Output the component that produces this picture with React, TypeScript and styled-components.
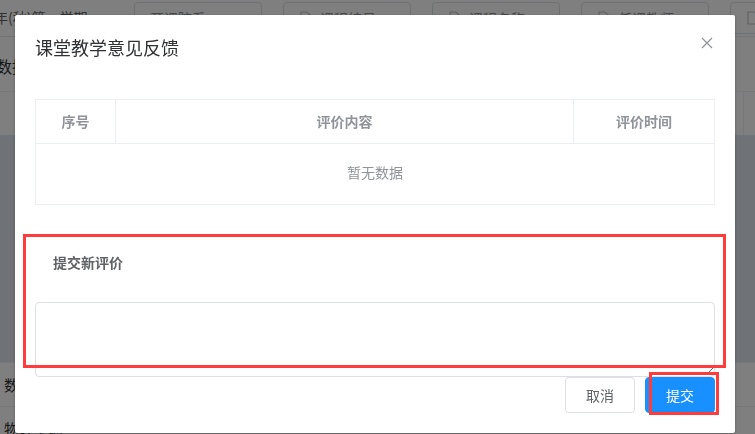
import React from 'react'
import styled, { createGlobalStyle } from 'styled-components'

const GlobalStyle = createGlobalStyle`
	html, body {
		margin: 0;
		padding: 0;
		width: 755px;
		height: 434px;
		overflow: hidden;
		background: #fff;
		font-family: 'Noto Sans CJK SC', 'Noto Sans', sans-serif;
	}
	* {
		box-sizing: border-box;
	}
`

const filters = [
	{ text: '开课院系', icon: false },
	{ text: '课程编号', icon: true },
	{ text: '课程名称', icon: true },
	{ text: '任课教师', icon: true },
	{ text: '课程类别', icon: true },
]

const rows = ['数学分析', '物理实验']

const App = () => {
	return (
		<>
			<GlobalStyle />
			<Page>
				<Toolbar>
					<Term>年(秋)第一学期</Term>
					{filters.map((f) => (
						<FilterBox key={f.text}>
							{f.icon && <DocIcon />}
							<span>{f.text}</span>
						</FilterBox>
					))}
				</Toolbar>
				<Heading>数据统计</Heading>
				<GridHead>
					<span />
				</GridHead>
				<Band />
				{rows.map((r) => (
					<GridRow key={r}>{r}</GridRow>
				))}
			</Page>

			<Overlay>
				<Dialog>
					<DialogHeader>
						<DialogTitle>课堂教学意见反馈</DialogTitle>
						<CloseButton aria-label="close">
							<svg width="12" height="12" viewBox="0 0 12 12">
								<path d="M1 1L11 11M11 1L1 11" stroke="#909399" strokeWidth="1.2" />
							</svg>
						</CloseButton>
					</DialogHeader>

					<DialogBody>
						<Table>
							<HeadRow>
								<HeadCell>序号</HeadCell>
								<HeadCell>评价内容</HeadCell>
								<HeadCell last>评价时间</HeadCell>
							</HeadRow>
							<EmptyRow>暂无数据</EmptyRow>
						</Table>

						<FieldLabel>提交新评价</FieldLabel>
						<TextArea />
					</DialogBody>

					<DialogFooter>
						<Button>取消</Button>
						<Button primary>提交</Button>
					</DialogFooter>

					<Marker style={{ left: 8, top: 219, width: 703, height: 134 }} />
					<Marker style={{ left: 634, top: 357, width: 70, height: 43 }} />
				</Dialog>
			</Overlay>
		</>
	)
}

const DocIcon = () => (
	<svg width="13" height="14" viewBox="0 0 13 14" fill="none">
		<path d="M2 1h6l3 3v9H2z" stroke="#c0c4cc" strokeWidth="1.2" />
	</svg>
)

export default App

const Page = styled.div`
	width: 755px;
	color: #303133;
`

const Toolbar = styled.div`
	display: flex;
	align-items: flex-start;
	gap: 21px;
	height: 37px;
	padding-top: 2px;
	border-bottom: 1px solid #e4e7ed;
`

const Term = styled.div`
	flex: 0 0 119px;
	margin-left: -6px;
	font-size: 14px;
	line-height: 30px;
	color: #606266;
	white-space: nowrap;
`

const FilterBox = styled.div`
	flex: 0 0 128px;
	height: 32px;
	display: flex;
	align-items: center;
	gap: 8px;
	padding: 0 15px;
	border: 1px solid #dcdfe6;
	border-radius: 4px;
	font-size: 14px;
	color: #909399;
	white-space: nowrap;
	overflow: hidden;
`

const Heading = styled.div`
	height: 55px;
	margin-left: -4px;
	padding-top: 3px;
	font-size: 16px;
	line-height: 52px;
	color: #303133;
	border-bottom: 1px solid #ebeef5;
`

const GridHead = styled.div`
	height: 43px;
	display: flex;
	justify-content: flex-end;

	span {
		width: 12px;
		border-left: 1px solid #ebeef5;
	}
`

const Band = styled.div`
	height: 228px;
	background: #dee6ef;
	border-bottom: 1px solid #ebeef5;
`

const GridRow = styled.div`
	height: 44px;
	padding-left: 4px;
	font-size: 15px;
	line-height: 44px;
	color: #303133;
	border-bottom: 1px solid #ebeef5;
`

const Overlay = styled.div`
	position: fixed;
	inset: 0;
	background: rgba(0, 0, 0, 0.5);
	z-index: 10;
`

const Dialog = styled.div`
	position: relative;
	width: 720px;
	margin: 15px 0 0 15px;
	background: #fff;
	border-radius: 2px;
	box-shadow: 0 1px 3px rgba(0, 0, 0, 0.3);
`

const DialogHeader = styled.div`
	position: relative;
	padding: 20px 20px 10px;
`

const DialogTitle = styled.span`
	display: block;
	font-size: 18px;
	line-height: 24px;
	color: #303133;
`

const CloseButton = styled.button`
	position: absolute;
	top: 20px;
	right: 20px;
	width: 16px;
	height: 16px;
	padding: 0;
	border: none;
	background: transparent;
	display: flex;
	align-items: center;
	justify-content: center;
	cursor: pointer;
`

const DialogBody = styled.div`
	padding: 30px 20px 0;
`

const Table = styled.div`
	border: 1px solid #ebeef5;
`

const HeadRow = styled.div`
	display: grid;
	grid-template-columns: 80px 1fr 140px;
	border-bottom: 1px solid #ebeef5;
`

const HeadCell = styled.div<{ last?: boolean }>`
	height: 43px;
	font-size: 14px;
	line-height: 43px;
	font-weight: bold;
	color: #909399;
	text-align: center;
	border-right: ${(p) => (p.last ? 'none' : '1px solid #ebeef5')};
`

const EmptyRow = styled.div`
	height: 60px;
	font-size: 14px;
	line-height: 56px;
	color: #909399;
	text-align: center;
`

const FieldLabel = styled.div`
	margin-top: 47px;
	padding-left: 18px;
	font-size: 14px;
	line-height: 20px;
	font-weight: bold;
	color: #606266;
`

const TextArea = styled.textarea`
	display: block;
	width: 100%;
	height: 75px;
	margin-top: 30px;
	padding: 5px 15px;
	border: 1px solid #dcdfe6;
	border-radius: 4px;
	font-family: inherit;
	font-size: 14px;
	color: #606266;
	outline: none;
`

const DialogFooter = styled.div`
	display: flex;
	justify-content: flex-end;
	gap: 10px;
	padding: 0 20px 20px;
`

const Button = styled.button<{ primary?: boolean }>`
	height: 36px;
	padding: 0 20px;
	border-radius: 4px;
	font-family: inherit;
	font-size: 14px;
	line-height: 34px;
	cursor: pointer;
	border: 1px solid ${(p) => (p.primary ? '#1890ff' : '#dcdfe6')};
	background: ${(p) => (p.primary ? '#1890ff' : '#fff')};
	color: ${(p) => (p.primary ? '#fff' : '#606266')};
`

const Marker = styled.div`
	position: absolute;
	border: 3px solid #ff3b3b;
	pointer-events: none;
`
